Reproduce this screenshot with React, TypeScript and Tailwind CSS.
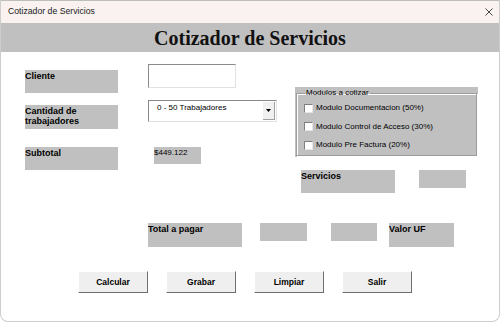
import React from "react";

const Label = ({ text, w, h, className = "" }: { text: string; w: string; h: string; className?: string }) => (
  <div className={`${w} ${h} bg-[#c0c0c0] text-[9px] font-bold leading-[10px] pt-[1px] text-black ${className}`}>{text}</div>
);

const Box = ({ w, h, className = "", children }: { w: string; h: string; className?: string; children?: React.ReactNode }) => (
  <div className={`${w} ${h} bg-[#c0c0c0] text-[8px] leading-[10px] pt-[1px] text-black ${className}`}>{children}</div>
);

const Check = ({ text }: { text: string }) => (
  <div className="h-[18.5px] flex items-center pl-[7px]">
    <div className="w-[9px] h-[9px] bg-white border-t border-l border-t-[#7f7f7f] border-l-[#7f7f7f] border-r border-b border-r-[#e6e6e6] border-b-[#e6e6e6]" />
    <span className="ml-[3px] text-[8px] leading-[10px] text-black">{text}</span>
  </div>
);

const Btn = ({ text }: { text: string }) => (
  <div className="w-[70px] h-[22px] bg-[#efefef] border border-t-white border-l-white border-r-[#6e6e6e] border-b-[#6e6e6e] flex items-center justify-center text-[8.5px] font-bold text-black">
    {text}
  </div>
);

export default function App() {
  return (
    <div className="w-[500px] h-[322px] bg-white border-x border-b border-[#cdcdcd] rounded-b-[8px] overflow-hidden font-['Liberation_Sans',Arial,sans-serif] text-black">
      <div className="h-[23px] bg-[#f9f2f0] flex items-center justify-between pl-[7px] pr-[5px] border-t border-[#bdbdbd]">
        <span className="text-[8.7px] text-[#1a1a1a]">Cotizador de Servicios</span>
        <svg width="8" height="8" viewBox="0 0 8 8" className="mr-[1px]">
          <path d="M0.5 0.5 L7.5 7.5 M7.5 0.5 L0.5 7.5" stroke="#333" strokeWidth="0.9" />
        </svg>
      </div>
      <div className="h-[29px] bg-[#c0c0c0] flex items-center justify-center font-['Liberation_Serif','Times_New_Roman',serif] font-bold text-[20px] text-[#111]">
        Cotizador de Servicios
      </div>

      <div className="flex pl-[24px]">
        <div className="flex flex-col">
          <div className="mt-[12px] flex items-start">
            <Label text="Cliente" w="w-[93px]" h="h-[23px]" className="mt-[6px]" />
            <div className="ml-[30px] w-[88px] h-[24px] bg-white border-t border-l border-t-[#8a8a8a] border-l-[#8a8a8a] border-r border-b border-r-[#e2e2e2] border-b-[#e2e2e2]" />
          </div>
          <div className="mt-[7px] flex items-start">
            <Label text="Cantidad de trabajadores" w="w-[93px]" h="h-[24px]" className="mt-[5px] pr-[20px]" />
            <div className="ml-[30px] w-[129px] h-[22px] bg-white border-t border-l border-t-[#8a8a8a] border-l-[#8a8a8a] border-r border-b border-r-[#e2e2e2] border-b-[#e2e2e2] flex">
              <div className="flex-1 pl-[8px] pt-[2px] text-[8px] leading-[10px]">0 - 50 Trabajadores</div>
              <div className="w-[12px] my-[1px] mr-[1px] bg-[#f0f0f0] border-r border-b border-[#a0a0a0] flex items-center justify-center">
                <svg width="5" height="3" viewBox="0 0 5 3"><path d="M0 0 H5 L2.5 3 Z" fill="#000" /></svg>
              </div>
            </div>
          </div>
          <div className="mt-[18px] flex items-start">
            <Label text="Subtotal" w="w-[93px]" h="h-[23px]" />
            <Box w="w-[47px]" h="h-[17px]" className="ml-[36px]">$449.122</Box>
          </div>
        </div>

        <div className="ml-[18px] flex flex-col">
          <div className="mt-[35px] w-[183px] h-[70px] bg-[#c0c0c0] p-[1px]">
            <fieldset className="h-full border border-[#9d9d9d] shadow-[inset_1px_1px_0_#ffffff,1px_1px_0_#ffffff]">
              <legend className="ml-[8px] px-[1px] text-[8px] leading-[10px]">Modulos a cotizar</legend>
              <div className="flex flex-col mt-[1px]">
                <Check text="Modulo Documentacion (50%)" />
                <Check text="Modulo Control de Acceso (30%)" />
                <Check text="Modulo Pre Factura (20%)" />
              </div>
            </fieldset>
          </div>
          <div className="mt-[13px] ml-[6px] flex items-start">
            <Label text="Servicios" w="w-[94px]" h="h-[23px]" />
            <Box w="w-[47px]" h="h-[18px]" className="ml-[24px]" />
          </div>
        </div>
      </div>

      <div className="mt-[30px] pl-[147px] flex items-start">
        <Label text="Total a pagar" w="w-[94px]" h="h-[24px]" />
        <Box w="w-[47px]" h="h-[18px]" className="ml-[18px]" />
        <Box w="w-[46px]" h="h-[18px]" className="ml-[24px]" />
        <Label text="Valor UF" w="w-[65px]" h="h-[24px]" className="ml-[12px]" />
      </div>

      <div className="mt-[24px] pl-[77px] flex gap-[18px]">
        <Btn text="Calcular" />
        <Btn text="Grabar" />
        <Btn text="Limpiar" />
        <Btn text="Salir" />
      </div>
    </div>
  );
}
